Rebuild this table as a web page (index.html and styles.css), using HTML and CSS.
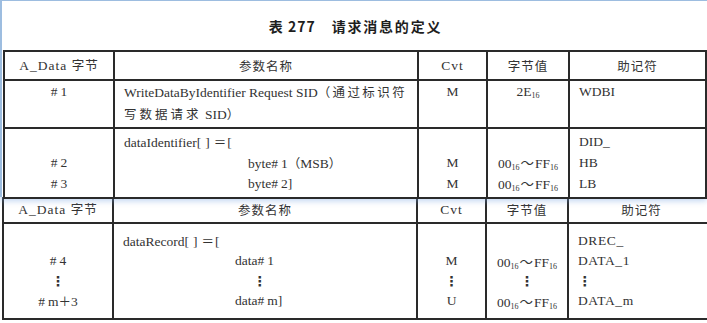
FILE: index.html
```html
<!DOCTYPE html>
<html lang="zh-CN">
<head>
<meta charset="utf-8">
<title>表 277 请求消息的定义</title>
<link rel="stylesheet" href="styles.css">
</head>
<body>
<div class="page">
  <div class="panel">
    <div class="title"><span class="tno">表 277</span><span class="tname">请求消息的定义</span></div>
    <table class="tbl t1">
      <colgroup><col class="c1"><col class="c2"><col class="c3"><col class="c4"><col class="c5"></colgroup>
      <tr class="hd"><th>A_Data <span class="cjk">字节</span></th><th class="cjk">参数名称</th><th>Cvt</th><th class="cjk">字节值</th><th class="cjk">助记符</th></tr>
      <tr class="r1">
        <td class="ctr"><div class="ln"><span class="sh">#</span>1</div></td>
        <td class="lft"><div class="ln">WriteDataByIdentifier Request SID<span class="cj2">（通过标识符</span></div><div class="ln"><span class="cj3">写数据请求</span> SID<span class="cjk">）</span></div></td>
        <td class="ctr"><div class="ln">M</div></td>
        <td class="ctr"><div class="ln">2E<sub>16</sub></div></td>
        <td class="lft"><div class="ln">WDBI</div></td>
      </tr>
      <tr class="r2">
        <td class="ctr"><div class="ln">&nbsp;</div><div class="ln"><span class="sh">#</span>2</div><div class="ln"><span class="sh">#</span>3</div></td>
        <td class="lft"><div class="ln">dataIdentifier<span class="br">[]</span><span class="eq">＝</span>[</div><div class="ln ind1">byte<span class="sh">#</span>1<span class="cjk">（</span>MSB<span class="cjk">）</span></div><div class="ln ind1">byte<span class="sh">#</span>2]</div></td>
        <td class="ctr"><div class="ln">&nbsp;</div><div class="ln">M</div><div class="ln">M</div></td>
        <td class="ctr"><div class="ln">&nbsp;</div><div class="ln">00<sub>16</sub><span class="tl">～</span>FF<sub>16</sub></div><div class="ln">00<sub>16</sub><span class="tl">～</span>FF<sub>16</sub></div></td>
        <td class="lft"><div class="ln">DID_</div><div class="ln">HB</div><div class="ln">LB</div></td>
      </tr>
    </table>
  </div>
  <table class="tbl t2">
    <colgroup><col class="c1"><col class="c2"><col class="c3"><col class="c4"><col class="c5"></colgroup>
    <tr class="hd"><th>A_Data <span class="cjk">字节</span></th><th class="cjk">参数名称</th><th>Cvt</th><th class="cjk">字节值</th><th class="cjk">助记符</th></tr>
    <tr class="r3">
      <td class="ctr"><div class="ln">&nbsp;</div><div class="ln"><span class="sh">#</span>4</div><div class="ln dots">⋮</div><div class="ln"><span class="sh">#</span>m<span class="pl">＋</span>3</div></td>
      <td class="lft"><div class="ln">dataRecord<span class="br">[]</span><span class="eq">＝</span>[</div><div class="ln ind2">data<span class="sh">#</span>1</div><div class="ln ind3 dots">⋮</div><div class="ln ind2">data<span class="sh">#</span>m]</div></td>
      <td class="ctr"><div class="ln">&nbsp;</div><div class="ln">M</div><div class="ln dots">⋮</div><div class="ln">U</div></td>
      <td class="ctr"><div class="ln">&nbsp;</div><div class="ln">00<sub>16</sub><span class="tl">～</span>FF<sub>16</sub></div><div class="ln dots">⋮</div><div class="ln">00<sub>16</sub><span class="tl">～</span>FF<sub>16</sub></div></td>
      <td class="lft sp"><div class="ln">DREC_</div><div class="ln">DATA_1</div><div class="ln dots">⋮</div><div class="ln">DATA_m</div></td>
    </tr>
  </table>
</div>
</body>
</html>
```

FILE: styles.css
```css
html, body {
  margin: 0;
  padding: 0;
  background: #ffffff;
}
body {
  width: 707px;
  height: 323px;
  overflow: hidden;
  font-family: "Liberation Serif", "Noto Sans CJK SC", serif;
  font-size: 13.5px;
  color: #333333;
}
.page {
  width: 707px;
}
.panel {
  position: relative;
  z-index: 1;
  background: #ffffff;
  border-top: 1px solid #9dbde0;
  border-left: 2px solid #9dbde0;
  height: 197px;
  box-sizing: border-box;
  box-shadow: 0 4px 6px rgba(120, 165, 225, 0.45);
}
.title {
  height: 49px;
  display: flex;
  align-items: center;
  justify-content: center;
  font-family: "Noto Sans CJK SC", sans-serif;
  font-weight: 700;
  font-size: 14px;
  color: #1e1e1e;
  padding-left: 2px;
}
.tno {
  letter-spacing: 1px;
  margin-right: 16px;
}
.tname {
  letter-spacing: 1.8px;
}
.tbl {
  border-collapse: collapse;
  table-layout: fixed;
}
.tbl th, .tbl td {
  border: 2px solid #2a2a2a;
  padding: 0;
  vertical-align: top;
}
.t1 {
  width: 702px;
  margin-left: 1px;
}
.t2 {
  width: 712px;
  margin-left: 2px;
}
.t2 tr.hd th {
  border-top: none;
}
.c1 { width: 110px; }
.c2 { width: 304px; }
.c3 { width: 69px; }
.c4 { width: 82px; }
.c5 { width: 137px; }
.t2 .c5 { width: 147px; }
.tbl th {
  font-weight: 400;
  height: 26px;
  line-height: 26px;
  vertical-align: middle;
  text-align: center;
  letter-spacing: 1px;
}
.t2 th {
  height: 24px;
  line-height: 24px;
}
.cjk {
  font-family: "Noto Sans CJK SC", sans-serif;
  font-size: 12.5px;
}
.cj2 {
  font-family: "Noto Sans CJK SC", sans-serif;
  font-size: 12.5px;
  letter-spacing: 2.4px;
}
.cj3 {
  font-family: "Noto Sans CJK SC", sans-serif;
  font-size: 12.5px;
  letter-spacing: 3px;
}
.ctr { text-align: center; }
.lft { text-align: left; padding-left: 9px !important; }
.sp { letter-spacing: 0.6px; }
.ln {
  white-space: nowrap;
}
.r1 td { padding-top: 0; height: 46px; }
.r1 .ln { line-height: 22px; height: 22px; }
.r2 td { padding-top: 2px; height: 66px; }
.r2 .ln { line-height: 21px; height: 21px; }
.r3 td { padding-top: 7px; height: 87px; }
.r3 .ln { line-height: 20px; height: 20px; }
.ind1 { padding-left: 124px; }
.ind2 { padding-left: 112px; }
.ind3 { padding-left: 130px; }
.sh {
  margin-right: 3px;
}
.br {
  letter-spacing: 4px;
}
.eq, .pl {
  font-family: "Noto Sans CJK SC", sans-serif;
  font-size: 12.5px;
}
.eq {
  margin-right: 1px;
}
.tl {
  font-family: "Noto Sans CJK SC", sans-serif;
  margin: 0 1px;
}
sub {
  font-size: 8px;
  vertical-align: -2px;
  line-height: 0;
}
.dots {
  font-family: "DejaVu Sans", sans-serif;
  font-weight: 700;
}
```
